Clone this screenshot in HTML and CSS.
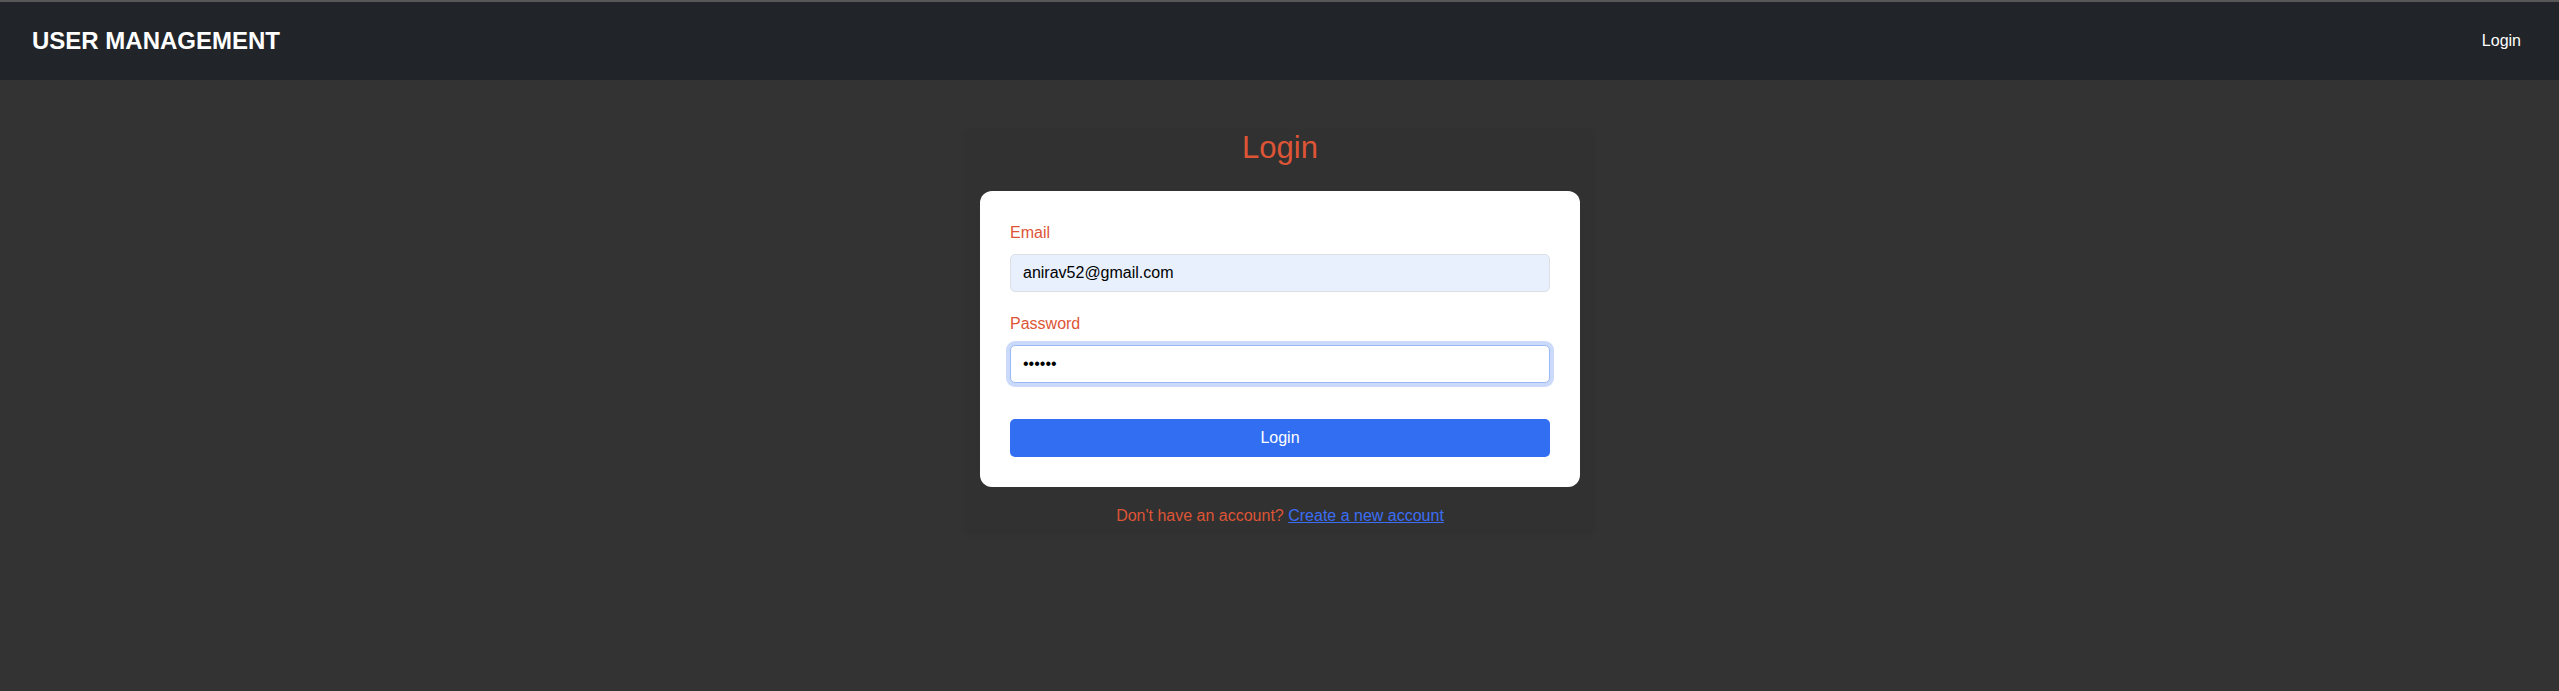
FILE: index.html
```html
<!DOCTYPE html>
<html lang="en">
<head>
<meta charset="utf-8">
<title>User Management - Login</title>
<link rel="stylesheet" href="styles.css">
</head>
<body>
<nav class="navbar">
  <a class="brand" href="#">USER MANAGEMENT</a>
  <a class="nav-link" href="#">Login</a>
</nav>
<main class="page">
  <section class="login-box">
    <h1 class="login-title">Login</h1>
    <form class="card">
      <div class="field">
        <label class="field-label" for="email">Email</label>
        <input class="field-input autofilled" id="email" type="email" value="anirav52@gmail.com">
      </div>
      <div class="field">
        <label class="field-label" for="password">Password</label>
        <input class="field-input focused" id="password" type="password" value="123456">
      </div>
      <button class="submit" type="button">Login</button>
    </form>
    <p class="signup">Don't have an account? <a class="signup-link" href="#">Create a new account</a></p>
  </section>
</main>
</body>
</html>
```

FILE: styles.css
```css
html, body {
  margin: 0;
  padding: 0;
}

body {
  background: #333333;
  font-family: "Liberation Sans", Arial, sans-serif;
  min-height: 100vh;
}

.navbar {
  height: 78px;
  border-top: 2px solid #575757;
  background: #212529;
  display: flex;
  align-items: center;
  justify-content: space-between;
  padding: 0 38px 0 32px;
}

.brand {
  color: #ffffff;
  font-weight: 700;
  font-size: 24px;
  text-decoration: none;
}

.nav-link {
  color: #ffffff;
  font-size: 16px;
  text-decoration: none;
}

.page {
  display: flex;
  justify-content: center;
  padding-top: 49px;
}

.login-box {
  width: 600px;
  padding: 0 13px 2px 14px;
  background: #313131;
  box-shadow: 0 3px 6px rgba(0, 0, 0, 0.08);
  display: flex;
  flex-direction: column;
  align-items: center;
}

.login-title {
  margin: 1px 0 25px;
  font-size: 31px;
  line-height: 36px;
  font-weight: 400;
  color: #dd5536;
}

.card {
  width: 540px;
  padding: 30px;
  background: #ffffff;
  border-radius: 12px;
  display: flex;
  flex-direction: column;
}

.field {
  display: flex;
  flex-direction: column;
  margin-bottom: 20px;
}

.field-label {
  font-family: "Liberation Sans Narrow", "Arial Narrow", "Liberation Sans", sans-serif;
  font-size: 16px;
  line-height: 24px;
  color: #dd5536;
  margin-bottom: 9px;
}

.field-input {
  box-sizing: border-box;
  height: 38px;
  width: 100%;
  padding: 0 12px;
  border: 1px solid #dcdfe4;
  border-radius: 5px;
  font-family: "Liberation Sans Narrow", "Arial Narrow", "Liberation Sans", sans-serif;
  font-size: 16px;
  color: #000000;
  background: #ffffff;
  outline: none;
}

.autofilled {
  background: #e8f0fe;
}

.focused {
  border-color: #9bb9f6;
  box-shadow: 0 0 0 4px #cbdafb;
}

.submit {
  margin-top: 16px;
  height: 38px;
  border: none;
  border-radius: 5px;
  background: #316ef2;
  color: #ffffff;
  font-family: "Liberation Sans Narrow", "Arial Narrow", "Liberation Sans", sans-serif;
  font-size: 16px;
  cursor: pointer;
}

.signup {
  margin: 17px 0 0;
  font-family: "Liberation Sans Narrow", "Arial Narrow", "Liberation Sans", sans-serif;
  font-size: 16px;
  line-height: 24px;
  color: #dd5536;
}

.signup-link {
  color: #3b6ef5;
  text-decoration: underline;
}
```
